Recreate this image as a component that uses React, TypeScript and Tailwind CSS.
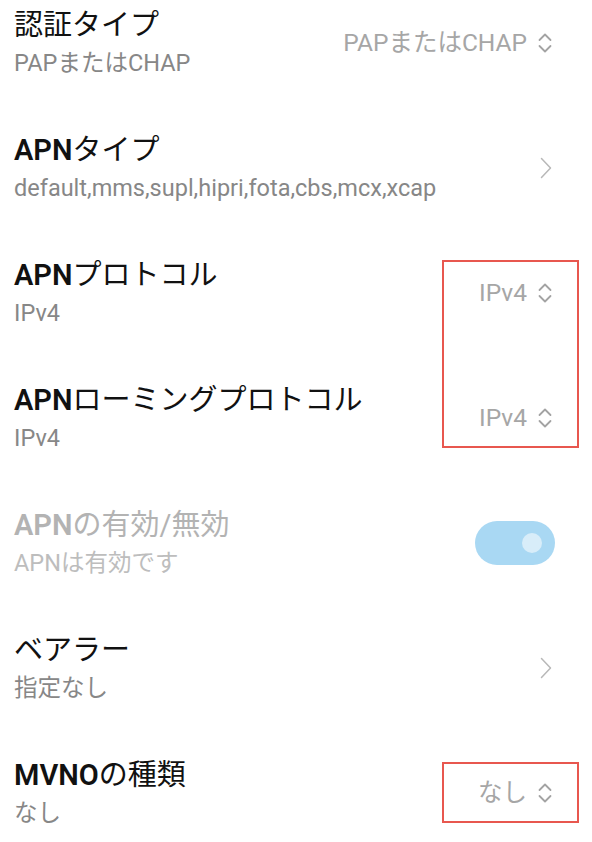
import React from 'react';

type Trailing =
  | { kind: 'select'; value: string }
  | { kind: 'chevron' }
  | { kind: 'toggle' };

interface SettingRow {
  title: React.ReactNode;
  summary: string;
  trailing: Trailing;
  disabled?: boolean;
}

const UpDownIcon = () => (
  <svg width="16" height="24" viewBox="0 0 16 24" fill="none" stroke="#a3a3a3" strokeWidth="1.8" strokeLinecap="round" strokeLinejoin="round">
    <path d="M2.5 9 L8 3.5 L13.5 9" />
    <path d="M2.5 15 L8 20.5 L13.5 15" />
  </svg>
);

const ChevronRight = () => (
  <svg width="12" height="22" viewBox="0 0 12 22" fill="none" stroke="#b8b8b8" strokeWidth="1.5" strokeLinecap="round" strokeLinejoin="round">
    <path d="M1.5 1.5 L10.5 11 L1.5 20.5" />
  </svg>
);

const Latin = ({ children }: { children: React.ReactNode }) => <span className="font-semibold">{children}</span>;

const rows: SettingRow[] = [
  { title: '認証タイプ', summary: 'PAPまたはCHAP', trailing: { kind: 'select', value: 'PAPまたはCHAP' } },
  { title: <><Latin>APN</Latin>タイプ</>, summary: 'default,mms,supl,hipri,fota,cbs,mcx,xcap', trailing: { kind: 'chevron' } },
  { title: <><Latin>APN</Latin>プロトコル</>, summary: 'IPv4', trailing: { kind: 'select', value: 'IPv4' } },
  { title: <><Latin>APN</Latin>ローミングプロトコル</>, summary: 'IPv4', trailing: { kind: 'select', value: 'IPv4' } },
  { title: <><Latin>APN</Latin>の有効/無効</>, summary: 'APNは有効です', trailing: { kind: 'toggle' }, disabled: true },
  { title: 'ベアラー', summary: '指定なし', trailing: { kind: 'chevron' } },
  { title: <><Latin>MVNO</Latin>の種類</>, summary: 'なし', trailing: { kind: 'select', value: 'なし' } },
];

const TrailingWidget = ({ trailing }: { trailing: Trailing }) => {
  if (trailing.kind === 'select') {
    return (
      <div className="flex items-center gap-[10px]">
        <span className="text-[24.5px] leading-[30px] text-[#a6a6a6]">{trailing.value}</span>
        <UpDownIcon />
      </div>
    );
  }
  if (trailing.kind === 'chevron') {
    return (
      <div className="pr-[1px]">
        <ChevronRight />
      </div>
    );
  }
  return (
    <div className="w-[80px] h-[44px] rounded-full bg-[#a9d8f3] flex items-center justify-end pr-[13px] mr-[-2px]">
      <div className="w-[20px] h-[20px] rounded-full bg-[#d8edf9]" />
    </div>
  );
};

export default function App() {
  return (
    <div
      className="relative w-[592px] h-[842px] overflow-hidden bg-white"
      style={{ fontFamily: 'Roboto, "Noto Sans CJK JP", sans-serif' }}
    >
      <div className="mt-[-20px] flex flex-col">
        {rows.map((row, i) => (
          <div key={i} className="h-[125px] flex items-center justify-between pl-[14px] pr-[39px]">
            <div className="flex flex-col">
              <span className={`text-[29px] leading-[40px] ${row.disabled ? 'text-[#b3b3b3]' : 'text-[#111111]'}`}>
                {row.title}
              </span>
              <span className={`text-[23.5px] leading-[36px] ${row.disabled ? 'text-[#bdbdbd]' : 'text-[#878787]'}`}>
                {row.summary}
              </span>
            </div>
            <TrailingWidget trailing={row.trailing} />
          </div>
        ))}
      </div>

      {/* annotation boxes */}
      <div className="absolute left-[442px] top-[260px] w-[137px] h-[188px] border-2 border-[#e8574f]" />
      <div className="absolute left-[442px] top-[762px] w-[137px] h-[61px] border-2 border-[#e8574f]" />
    </div>
  );
}
